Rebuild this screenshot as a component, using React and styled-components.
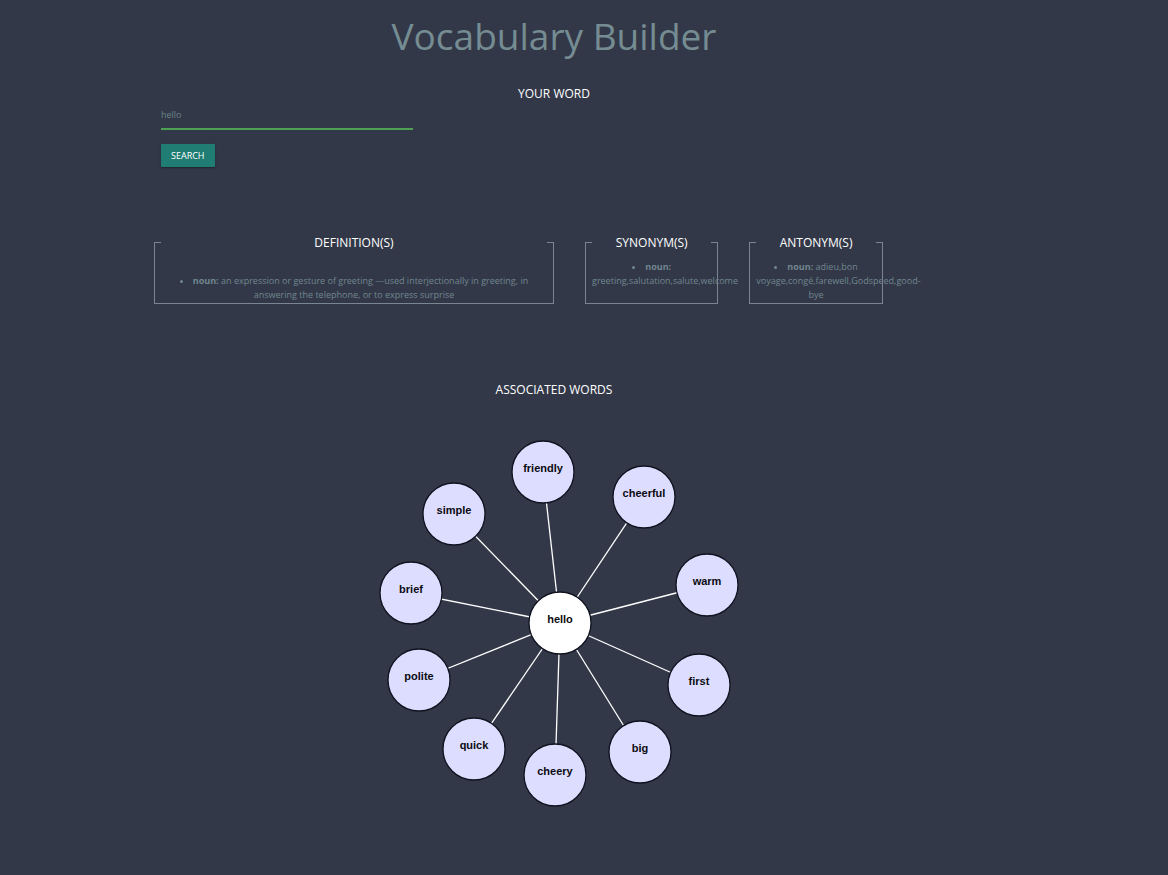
import React from "react";
import styled, { createGlobalStyle } from "styled-components";

const GlobalStyle = createGlobalStyle`
  *, *::before, *::after { box-sizing: border-box; }
  body {
    margin: 0;
    background: #323848;
    color: #78909c;
    font: 9px/14px "Open Sans", "Noto Sans", sans-serif;
    text-align: center;
  }
`;

const Page = styled.main`
  padding: 12px 214px 48px 154px;
`;

const Title = styled.h1`
  margin: 0;
  color: #758c92;
  font-size: 37px;
  font-weight: 400;
  line-height: 48px;
`;

const SearchForm = styled.form`
  display: flex;
  flex-direction: column;
  align-items: flex-start;
  margin-top: 26px;
  padding: 0 7px;
`;

const Heading = styled.h2`
  margin: 0;
  color: #fff;
  font-size: 12px;
  font-weight: 400;
  line-height: 16px;
`;

const FieldLabel = styled.label`
  align-self: center;
  color: #fff;
  font-size: 12px;
  line-height: 16px;
`;

const WordInput = styled.input`
  width: 32%;
  min-width: 120px;
  height: 28px;
  padding: 0 0 2px;
  border: 0;
  border-bottom: 2px solid #4ca152;
  outline: 0;
  background: transparent;
  color: #6c8587;
  font: inherit;
`;

const SearchButton = styled.button`
  height: 23px;
  margin-top: 14px;
  padding: 0 10px;
  border: 0;
  border-radius: 1px;
  background: #1f7d73;
  box-shadow: 0 1px 2px rgba(0, 0, 0, 0.4);
  color: #fff;
  font: inherit;
`;

const Results = styled.div`
  display: grid;
  grid-template-columns: 50% 16.67% 16.67%;
  gap: 31px;
  margin-top: 66px;
`;

const ResultBox = styled.fieldset`
  min-width: 0;
  margin: 0;
  padding: 9px 6px 1px;
  border: 1px solid #7b8491;
`;

const ResultTitle = styled.legend`
  width: 100%;
  padding: 2px 0 0;
  color: #fff;
  font-size: 12px;
  line-height: 16px;
`;

const Meanings = styled.ul`
  margin: 0;
  padding: ${(p) => (p.$spaced ? "14px 0 0" : "0")};
  list-style-position: inside;
  color: #71868e;
`;

const PartOfSpeech = styled.strong`
  font-weight: 700;
`;

const Associations = styled.section`
  margin-top: 78px;
`;

const Graph = styled.svg`
  display: block;
  width: 402px;
  height: 402px;
  margin: 26px auto 0;
`;

const Edge = styled.line`
  stroke: #fff;
  stroke-width: 1.3;
`;

const Circle = styled.circle`
  fill: ${(p) => (p.$root ? "#fff" : "#ddf")};
  stroke: #10131f;
  stroke-width: 1.3;
`;

const NodeText = styled.text`
  fill: #0b0b12;
  font: 700 11px "Liberation Sans", Arial, sans-serif;
  text-anchor: middle;
`;

const results = [
  {
    title: "DEFINITION(S)",
    spaced: true,
    text: "an expression or gesture of greeting —used interjectionally in greeting, in answering the telephone, or to express surprise",
  },
  { title: "SYNONYM(S)", text: "greeting,salutation,salute,welcome" },
  {
    title: "ANTONYM(S)",
    text: "adieu,bon voyage,congé,farewell,Godspeed,good-bye",
  },
];

const root = { word: "hello", x: 207, y: 199 };

const nodes = [
  { word: "friendly", x: 190, y: 48 },
  { word: "cheerful", x: 291, y: 73 },
  { word: "warm", x: 354, y: 161 },
  { word: "first", x: 346, y: 261 },
  { word: "big", x: 287, y: 328 },
  { word: "cheery", x: 202, y: 351 },
  { word: "quick", x: 121, y: 325 },
  { word: "polite", x: 66, y: 256 },
  { word: "brief", x: 58, y: 169 },
  { word: "simple", x: 101, y: 90 },
];

function WordNode({ node, isRoot }) {
  return (
    <g>
      <Circle cx={node.x} cy={node.y} r="31" $root={isRoot} />
      <NodeText x={node.x} y={node.y}>
        {node.word}
      </NodeText>
    </g>
  );
}

export default function App() {
  return (
    <>
      <GlobalStyle />
      <Page>
        <Title>Vocabulary Builder</Title>
        <SearchForm onSubmit={(e) => e.preventDefault()}>
          <FieldLabel htmlFor="word">YOUR WORD</FieldLabel>
          <WordInput id="word" type="text" defaultValue="hello" />
          <SearchButton type="submit">SEARCH</SearchButton>
        </SearchForm>
        <Results>
          {results.map((r) => (
            <ResultBox key={r.title}>
              <ResultTitle>{r.title}</ResultTitle>
              <Meanings $spaced={r.spaced}>
                <li>
                  <PartOfSpeech>noun:</PartOfSpeech> {r.text}
                </li>
              </Meanings>
            </ResultBox>
          ))}
        </Results>
        <Associations>
          <Heading>ASSOCIATED WORDS</Heading>
          <Graph viewBox="0 0 402 402" role="img" aria-label="Associated words">
            {nodes.map((n) => (
              <Edge key={n.word} x1={root.x} y1={root.y} x2={n.x} y2={n.y} />
            ))}
            {nodes.map((n) => (
              <WordNode key={n.word} node={n} />
            ))}
            <WordNode node={root} isRoot />
          </Graph>
        </Associations>
      </Page>
    </>
  );
}
